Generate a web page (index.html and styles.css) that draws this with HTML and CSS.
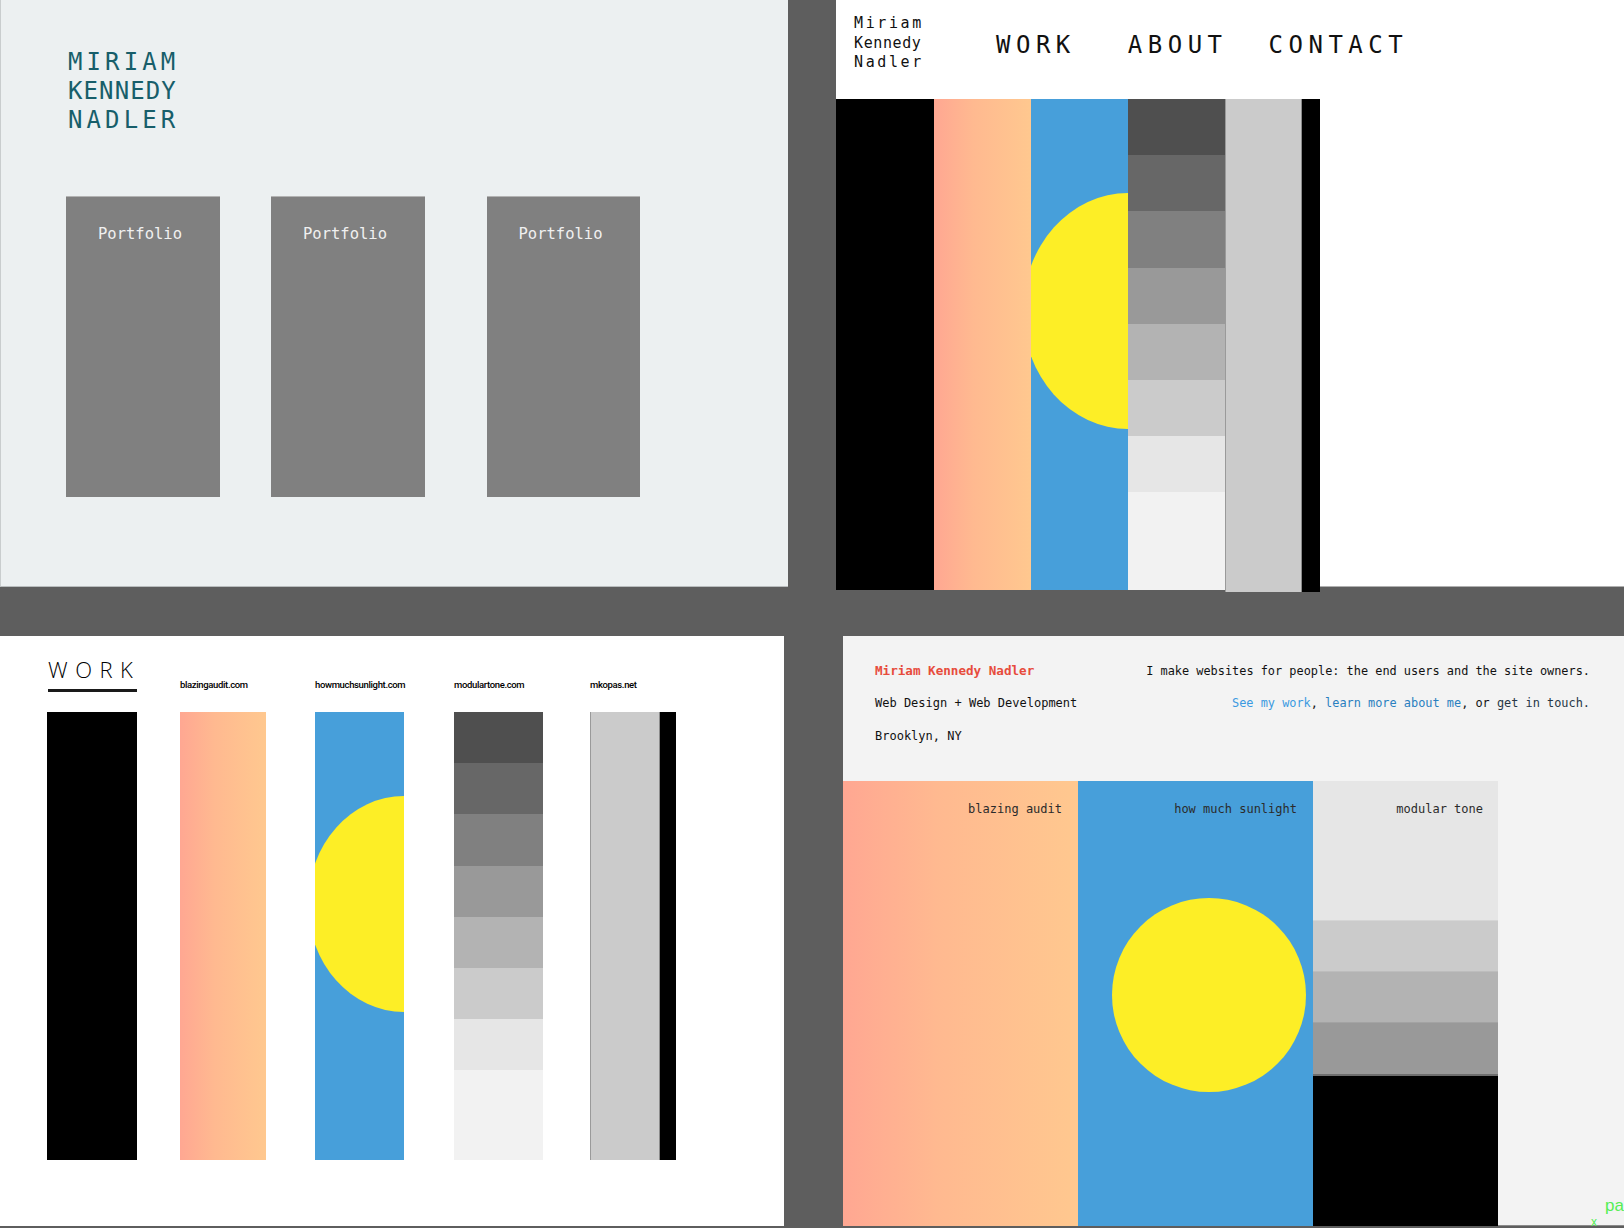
FILE: index.html
```html
<!DOCTYPE html>
<html lang="en">
<head>
    <meta charset="UTF-8">
    <meta name="viewport" content="width=device-width, initial-scale=1.0">
    <title>Miriam Kennedy Nadler - Sketches</title>
    <link rel="stylesheet" href="styles.css">
</head>
<body>
<div id="board">

    <div class="board-row row-top">
        <!-- sketch 1: first draft -->
        <section class="shot shot-intro">
            <h1 class="intro-name">
                <span class="ln-wide">MIRIAM</span>
                <span class="ln-tight">KENNEDY</span>
                <span class="ln-wide">NADLER</span>
            </h1>
            <div class="intro-cards">
                <div class="intro-card">Portfolio</div>
                <div class="intro-card card-2">Portfolio</div>
                <div class="intro-card card-3">Portfolio</div>
            </div>
        </section>

        <!-- sketch 2: nav on top -->
        <section class="shot shot-nav">
            <header class="nav-header">
                <div class="nav-name">
                    <span class="ln-wide">Miriam</span>
                    <span class="ln-tight">Kennedy</span>
                    <span class="ln-wide">Nadler</span>
                </div>
                <nav class="nav-links">
                    <a class="nav-work">WORK</a>
                    <a class="nav-about">ABOUT</a>
                    <a>CONTACT</a>
                </nav>
            </header>
            <div class="nav-bars">
                <div class="bar bar-black nb-black"></div>
                <div class="bar bar-peach nb-peach"></div>
                <div class="bar bar-blue nb-blue"><div class="sun"></div></div>
                <div class="bar steps nb-steps">
                    <div class="step s1"></div>
                    <div class="step s2"></div>
                    <div class="step s3"></div>
                    <div class="step s4"></div>
                    <div class="step s5"></div>
                    <div class="step s6"></div>
                    <div class="step s7"></div>
                    <div class="step s8"></div>
                </div>
                <div class="bar bar-light nb-light"></div>
                <div class="bar bar-black nb-edge"></div>
            </div>
        </section>
    </div>

    <div class="board-row row-bottom">
        <!-- sketch 3: work page -->
        <section class="shot shot-work">
            <div class="work-col wc-1">
                <div class="work-head">
                    <h2 class="work-title">WORK</h2>
                </div>
                <div class="bar bar-black work-bar"></div>
            </div>
            <div class="work-col wc-2">
                <div class="work-head"><span class="work-label">blazingaudit.com</span></div>
                <div class="bar bar-peach work-bar"></div>
            </div>
            <div class="work-col wc-3">
                <div class="work-head"><span class="work-label">howmuchsunlight.com</span></div>
                <div class="bar bar-blue work-bar"><div class="sun"></div></div>
            </div>
            <div class="work-col wc-4">
                <div class="work-head"><span class="work-label">modulartone.com</span></div>
                <div class="bar steps work-bar">
                    <div class="step s1"></div>
                    <div class="step s2"></div>
                    <div class="step s3"></div>
                    <div class="step s4"></div>
                    <div class="step s5"></div>
                    <div class="step s6"></div>
                    <div class="step s7"></div>
                    <div class="step s8"></div>
                </div>
            </div>
            <div class="work-col wc-5">
                <div class="work-head"><span class="work-label">mkopas.net</span></div>
                <div class="work-bar mkopas">
                    <div class="bar bar-light"></div>
                    <div class="bar bar-black"></div>
                </div>
            </div>
        </section>

        <!-- sketch 4: home page -->
        <section class="shot shot-home">
            <div class="home-intro">
                <div class="home-left">
                    <div class="home-name">Miriam Kennedy Nadler</div>
                    <div>Web Design + Web Development</div>
                    <div>Brooklyn, NY</div>
                </div>
                <div class="home-right">
                    <div>I make websites for people: the end users and the site owners.</div>
                    <div><a class="link-work">See my work</a>, <a class="link-about">learn more about me</a>, or <a class="link-contact">get in touch.</a></div>
                </div>
            </div>
            <div class="home-bars">
                <div class="home-tile bar-peach tile-blazing">
                    <span class="tile-label">blazing audit</span>
                </div>
                <div class="home-tile bar-blue tile-sun">
                    <span class="tile-label">how much sunlight</span>
                    <div class="home-sun"></div>
                </div>
                <div class="home-tile tile-tone">
                    <div class="tone t1"><span class="tile-label">modular tone</span></div>
                    <div class="tone t2"></div>
                    <div class="tone t3"></div>
                    <div class="tone t4"></div>
                    <div class="tone t5"></div>
                </div>
            </div>
        </section>
    </div>

    <div class="dev-tag">pa<span class="dev-x">x</span></div>
</div>
</body>
</html>
```

FILE: styles.css
```css
body {
    margin: 0;
    background-color: #5e5e5e;
}

#board {
    position: relative;
    width: 1624px;
    height: 1228px;
    overflow: hidden;
    background-color: #5e5e5e;
}

.board-row {
    display: flex;
    align-items: flex-start;
}

.row-top {
    height: 636px;
}

.row-bottom {
    height: 592px;
}

.shot {
    box-sizing: border-box;
    flex-shrink: 0;
}

/* shared bars */

.bar {
    position: relative;
    overflow: hidden;
    box-sizing: border-box;
    flex-shrink: 0;
}

.bar-black {
    background-color: #000;
}

.bar-peach {
    background: linear-gradient(90deg, #ffa792 0%, #ffb990 40%, #ffc88f 100%);
}

.bar-blue {
    background-color: #479fda;
}

.bar-light {
    background-color: #cbcbcb;
    border-left: 1px solid #9a9a9a;
    border-right: 1px solid #8a8a8a;
}

.sun {
    position: absolute;
    background-color: #fdee26;
    border-radius: 50%;
}

.steps {
    display: flex;
    flex-direction: column;
}

.step { flex-shrink: 0; }
.s1 { background-color: #4f4f4f; }
.s2 { background-color: #676767; }
.s3 { background-color: #808080; }
.s4 { background-color: #999999; }
.s5 { background-color: #b3b3b3; }
.s6 { background-color: #cbcbcb; }
.s7 { background-color: #e6e6e6; }
.s8 { background-color: #f2f2f2; flex-grow: 1; }

/* sketch 1 */

.shot-intro {
    width: 788px;
    height: 587px;
    padding: 48px 0 0 67px;
    background-color: #ecf0f1;
    border-left: 1px solid #c9cdce;
    border-bottom: 1px solid #b9bdbe;
}

.intro-name {
    margin: 0;
    font-family: "DejaVu Sans Mono", monospace;
    font-size: 24px;
    font-weight: normal;
    line-height: 29px;
    color: #175e6a;
}

.intro-name span {
    display: block;
}

.intro-name .ln-wide { letter-spacing: 4.1px; }
.intro-name .ln-tight { letter-spacing: 1.1px; }

.intro-cards {
    display: flex;
    margin: 61px 0 0 -2px;
}

.intro-card {
    width: 154px;
    height: 301px;
    box-sizing: border-box;
    padding: 27px 6px 0 0;
    background-color: #808080;
    border-top: 1px solid #b3b3b3;
    color: #f0f0f0;
    font-family: "DejaVu Sans Mono", monospace;
    font-size: 15.5px;
    line-height: 20px;
    text-align: center;
}

.card-2 { margin-left: 51px; }
.card-3 { margin-left: 62px; width: 153px; }

/* sketch 2 */

.shot-nav {
    width: 788px;
    height: 587px;
    margin-left: 48px;
    background-color: #fff;
    border-bottom: 1px solid #b0b0b0;
}

.nav-header {
    display: flex;
    height: 99px;
    box-sizing: border-box;
    padding: 14px 0 0 18px;
    color: #111;
    font-family: "DejaVu Sans Mono", monospace;
}

.nav-name {
    width: 80px;
    font-size: 15px;
    line-height: 19.5px;
}

.nav-name span {
    display: block;
}

.nav-name .ln-wide { letter-spacing: 2.6px; }
.nav-name .ln-tight { letter-spacing: 0.6px; }

.nav-links {
    display: flex;
    margin: 17px 0 0 62px;
    font-size: 24px;
    line-height: 29px;
    letter-spacing: 5.5px;
}

.nav-work { margin-right: 52px; }
.nav-about { margin-right: 41px; }

.nav-bars {
    display: flex;
    align-items: flex-start;
    height: 491px;
}

.nav-bars .bar { height: 491px; }
.nb-black { width: 98px; }
.nb-peach { width: 97px; }
.nb-blue { width: 97px; }
.nb-steps { width: 97px; }
.nav-bars .nb-light { width: 77px; height: 493px; }
.nav-bars .nb-edge { width: 18px; height: 493px; }

.nb-blue .sun {
    left: -8px;
    top: 94px;
    width: 210px;
    height: 236px;
}

.nb-steps .step { height: 56.2px; }

/* sketch 3 */

.shot-work {
    display: flex;
    width: 784px;
    height: 590px;
    padding-left: 47px;
    background-color: #fff;
}

.work-col {
    display: flex;
    flex-direction: column;
    flex-shrink: 0;
}

.wc-1 { width: 90px; }
.wc-2 { width: 86px; margin-left: 43px; }
.wc-3 { width: 89px; margin-left: 49px; }
.wc-4 { width: 89px; margin-left: 50px; }
.wc-5 { width: 86px; margin-left: 47px; }

.work-head {
    height: 76px;
    box-sizing: border-box;
    padding-top: 43px;
}

.wc-1 .work-head {
    padding-top: 20px;
}

.work-title {
    width: 89px;
    margin: 0 0 0 1px;
    padding-bottom: 7px;
    border-bottom: 3px solid #1a1a1a;
    font-family: "Open Sans", sans-serif;
    font-size: 22px;
    font-weight: 300;
    line-height: 26px;
    letter-spacing: 7.5px;
    white-space: nowrap;
    color: #000;
}

.work-label {
    display: block;
    font-family: Roboto, sans-serif;
    font-size: 9.5px;
    font-weight: 500;
    line-height: 12px;
    letter-spacing: -0.35px;
    white-space: nowrap;
    color: #000;
}

.work-bar {
    height: 448px;
}

.wc-3 .sun {
    left: -7px;
    top: 84px;
    width: 192px;
    height: 216px;
}

.wc-4 .step { height: 51.2px; }

.mkopas {
    display: flex;
}

.mkopas .bar-light { width: 70px; height: 448px; }
.mkopas .bar-black { width: 16px; height: 448px; }

/* sketch 4 */

.shot-home {
    width: 781px;
    height: 590px;
    margin-left: 59px;
    background-color: #f3f3f3;
    border-bottom: 1px solid #8a8a8a;
}

.home-intro {
    display: flex;
    justify-content: space-between;
    height: 145px;
    box-sizing: border-box;
    padding: 18px 34px 0 32px;
    font-family: "DejaVu Sans Mono", monospace;
    font-size: 12px;
    color: #111;
}

.home-left {
    line-height: 33px;
}

.home-name {
    font-size: 12.6px;
    font-weight: bold;
    color: #e74c3c;
}

.home-right {
    margin-top: 1px;
    font-size: 11.9px;
    line-height: 32px;
    text-align: right;
}

.link-work { color: #3b9ae1; }
.link-about { color: #2a80c0; }
.link-contact { color: #273746; }

.home-bars {
    display: flex;
    height: 445px;
}

.home-tile {
    flex-shrink: 0;
    box-sizing: border-box;
    height: 445px;
    text-align: right;
}

.tile-blazing { width: 235px; padding: 21px 16px 0 0; }
.tile-sun { width: 235px; padding: 21px 16px 0 0; }
.tile-tone {
    display: flex;
    flex-direction: column;
    width: 185px;
}

.tile-label {
    display: block;
    font-family: "DejaVu Sans Mono", monospace;
    font-size: 12px;
    line-height: 14px;
    color: #2b2b2b;
}

.home-sun {
    width: 194px;
    height: 194px;
    margin: 82px 0 0 34px;
    border-radius: 50%;
    background-color: #fdee26;
}

.tone { box-sizing: border-box; }
.t1 { height: 140px; padding: 21px 15px 0 0; background-color: #e6e6e6; border-bottom: 1px solid #d6d6d6; }
.t2 { height: 51px; background-color: #cbcbcb; border-bottom: 1px solid #bdbdbd; }
.t3 { height: 51px; background-color: #b3b3b3; border-bottom: 1px solid #a3a3a3; }
.t4 { height: 53px; background-color: #999; border-bottom: 2px solid #6e6e6e; }
.t5 { flex-grow: 1; background-color: #000; }

/* stray dev overlay in the corner */

.dev-tag {
    position: absolute;
    left: 1605px;
    top: 1196px;
    font-family: "Liberation Sans", sans-serif;
    font-size: 17px;
    line-height: 20px;
    color: #55ee55;
}

.dev-x {
    position: absolute;
    left: -14px;
    top: 20px;
    font-size: 12px;
    line-height: 12px;
}
```
